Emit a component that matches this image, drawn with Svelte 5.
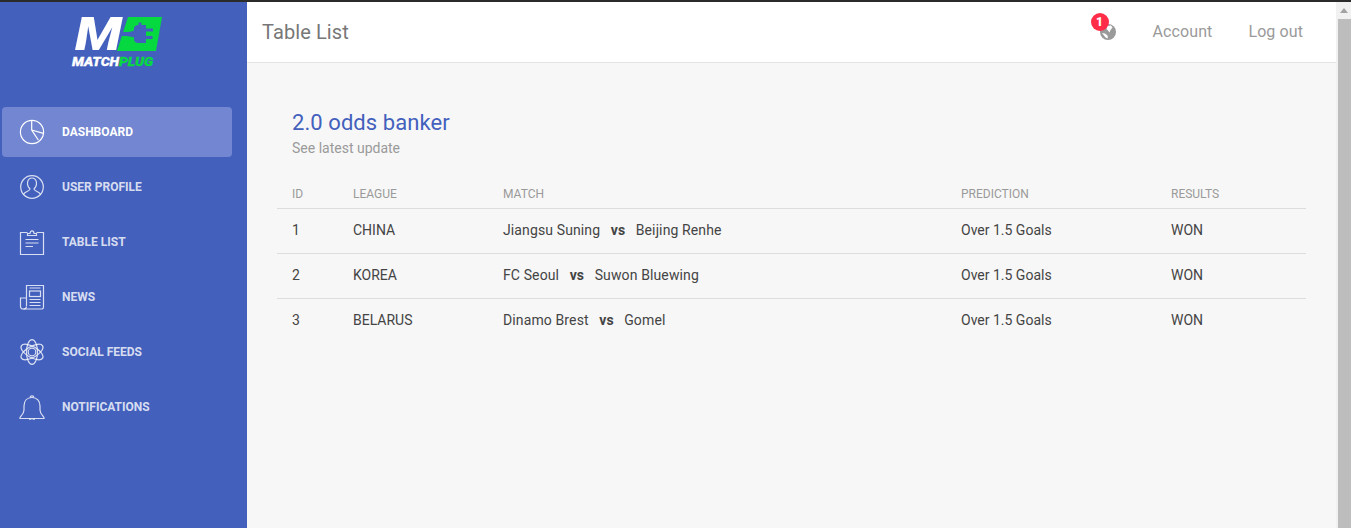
<script>
  const nav = [
    { label: 'Dashboard', icon: 'pie', active: true },
    { label: 'User Profile', icon: 'user' },
    { label: 'Table List', icon: 'clip' },
    { label: 'News', icon: 'news' },
    { label: 'Social Feeds', icon: 'atom' },
    { label: 'Notifications', icon: 'bell' }
  ];
  const rows = [
    { id: 1, league: 'CHINA', home: 'Jiangsu Suning', away: 'Beijing Renhe' },
    { id: 2, league: 'KOREA', home: 'FC Seoul', away: 'Suwon Bluewing' },
    { id: 3, league: 'BELARUS', home: 'Dinamo Brest', away: 'Gomel' }
  ];
</script>

<div class="page">
  <div class="topline"></div>
  <div class="frame">
    <aside class="sidebar">
      <div class="logo">
        <div class="mark">
          <span class="big-m">M</span>
          <svg class="plug" width="45" height="34" viewBox="0 0 45 34" aria-hidden="true">
            <path d="M11 0H45L39 34H0Z" fill="#05d93f" />
            <path d="M4 15H9C12 15 14.500 14.500 17 13.500V11.500C17 9.500 19 8 21.500 8V5.500H24.500V8H29V11.500H36V14.500H29V19H35.500V22H29V26H21.500C19 26 17 24.500 17 22.500V20.500C14 19.500 11 19 6 19H3Z" fill="#4360bd" />
          </svg>
        </div>
        <div class="word"><span class="w1">MATCH</span><span class="w2">PLUG</span></div>
      </div>
      <nav class="nav">
        {#each nav as item}
          <div class="item" class:active={item.active}>
            <svg class="icon" width="26" height="26" viewBox="0 0 26 26" fill="none" stroke="currentColor" stroke-width="1.200">
              {#if item.icon === 'pie'}
                <circle cx="13" cy="13" r="11.600" />
                <path d="M12.700 1.500V11L19.300 21M12.700 11L24.300 14.300" />
              {:else if item.icon === 'user'}
                <circle cx="13" cy="13" r="11.300" />
                <path d="M4.500 20.500c1-3 6-3 6.500-5.500-4-4-3-11 2-11s6 7 2 11c.5 2.500 5.500 2.500 6.500 5.500" />
              {:else if item.icon === 'clip'}
                <path d="M8.500 3.500H1.500V25.500H24.500V3.500H17.500" />
                <path d="M8.500 6.500V4.500H11C11 1 15 1 15 4.500H17.500V6.500Z" />
                <path d="M6.500 10.500H19.500M6.500 14H19.500M6.500 17.500H14" />
              {:else if item.icon === 'news'}
                <path d="M7.500 22V1.500H24.500V23C24.500 24.500 24 25 23 25H4C2.500 25 1.500 24 1.500 22.500V14H7.500" />
                <path d="M7.500 22.500C7.500 24.500 6 25 4.500 25" />
                <rect x="10.500" y="7" width="11" height="5.500" />
                <path d="M10.500 4H21.500M10.500 15.500H21.500M10.500 18.500H21.500M10.500 21.500H21.500" />
              {:else if item.icon === 'atom'}
                <circle cx="13" cy="13" r="3.800" />
                <ellipse cx="13" cy="13" rx="5.500" ry="12.300" />
                <ellipse cx="13" cy="13" rx="5.500" ry="12.300" transform="rotate(60 13 13)" />
                <ellipse cx="13" cy="13" rx="5.500" ry="12.300" transform="rotate(-60 13 13)" />
              {:else}
                <path d="M13 3.500c-5 0-8 3.500-8 8.500v4c0 3.500-2.500 5.500-4 7.500v1h24v-1c-1.500-2-4-4-4-7.500v-4c0-5-3-8.500-8-8.500z" />
                <path d="M11.200 3.500c0-2.300 3.600-2.300 3.600 0M10.500 24.500c.5 2.500 4.500 2.500 5 0" />
              {/if}
            </svg>
            <span class="label">{item.label}</span>
          </div>
        {/each}
      </nav>
    </aside>

    <main class="main">
      <header class="header">
        <div class="title">Table List</div>
        <div class="actions">
          <div class="globe">
            <svg width="16" height="16" viewBox="0 0 16 16" aria-hidden="true">
              <circle cx="8" cy="8" r="8" fill="#9a9a9a" />
              <path d="M7 2l4-.5 1.500 2-2 2.500-1 2.500-1.500-2-1.500-1.500zM2 9l3 .5 2.500 2 .5 3-2.500-1z" fill="#fff" />
            </svg>
            <span class="badge">1</span>
          </div>
          <span class="link">Account</span>
          <span class="link">Log out</span>
        </div>
      </header>

      <section class="content">
        <h4 class="card-title">2.0 odds banker</h4>
        <p class="card-sub">See latest update</p>
        <table>
          <thead>
            <tr>
              <th class="c1">ID</th>
              <th class="c2">League</th>
              <th class="c3">Match</th>
              <th class="c4">Prediction</th>
              <th class="c5">Results</th>
            </tr>
          </thead>
          <tbody>
            {#each rows as r}
              <tr>
                <td>{r.id}</td>
                <td>{r.league}</td>
                <td class="match">{r.home}<b class="vs">vs</b>{r.away}</td>
                <td>Over 1.5 Goals</td>
                <td>WON</td>
              </tr>
            {/each}
          </tbody>
        </table>
      </section>
    </main>

    <div class="scrollbar">
      <div class="arrow"></div>
      <div class="thumb"></div>
    </div>
  </div>
</div>

<style>
  :global(body) {
    margin: 0;
    overflow: hidden;
  }
  .page {
    height: 528px;
    display: flex;
    flex-direction: column;
    font-family: Roboto, "Liberation Sans", sans-serif;
    overflow: hidden;
  }
  .topline {
    height: 2px;
    flex: none;
    background: #2b2b2b;
  }
  .frame {
    flex: 1;
    display: flex;
    min-height: 0;
  }
  .sidebar {
    width: 247px;
    flex: none;
    background: #4360bd;
    padding-top: 15px;
    box-sizing: border-box;
  }
  .logo {
    height: 90px;
    display: flex;
    flex-direction: column;
    align-items: flex-start;
    padding-left: 72px;
  }
  .mark {
    display: flex;
    height: 34px;
    align-items: center;
    margin-left: 3px;
  }
  .big-m {
    display: block;
    font-size: 47px;
    line-height: 34px;
    font-weight: 900;
    font-style: italic;
    color: #fff;
    width: 42px;
    transform: scaleX(1.17);
    transform-origin: left center;
  }
  .plug {
    display: block;
    position: relative;
  }
  .word {
    font-size: 12px;
    line-height: 12px;
    font-weight: 900;
    font-style: italic;
    margin-top: 5px;
    -webkit-text-stroke: 0.3px currentColor;
    transform: scaleX(1.16);
    transform-origin: left center;
  }
  .w1 { color: #fff; }
  .w2 { color: #05d93f; }
  .nav {
    display: flex;
    flex-direction: column;
    gap: 5px;
  }
  .item {
    height: 50px;
    width: 230px;
    margin-left: 2px;
    padding-left: 17px;
    box-sizing: border-box;
    border-radius: 4px;
    display: flex;
    align-items: center;
    color: rgba(255, 255, 255, 0.8);
  }
  .item.active {
    background: #7286d1;
    color: #fff;
  }
  .icon {
    flex: none;
    margin-right: 17px;
  }
  .label {
    font-size: 12px;
    font-weight: 700;
    text-transform: uppercase;
  }
  .main {
    flex: 1;
    min-width: 0;
    background: #f7f7f7;
    display: flex;
    flex-direction: column;
  }
  .header {
    height: 61px;
    box-sizing: border-box;
    flex: none;
    background: #fff;
    border-bottom: 1px solid #e3e3e3;
    display: flex;
    align-items: center;
    justify-content: space-between;
    padding: 0 33px 1px 15px;
  }
  .title {
    font-size: 20px;
    letter-spacing: 0.1px;
    color: #777;
  }
  .actions {
    display: flex;
    align-items: center;
    gap: 36px;
    font-size: 16px;
    letter-spacing: 0.1px;
    color: #9a9a9a;
  }
  .globe {
    position: relative;
    width: 16px;
    height: 16px;
    margin-right: 1px;
  }
  .globe svg {
    display: block;
  }
  .badge {
    position: absolute;
    left: -9px;
    top: -11px;
    width: 18px;
    height: 18px;
    border-radius: 50%;
    background: #ff2d47;
    color: #fff;
    font-size: 12px;
    font-weight: 900;
    text-align: center;
    line-height: 18px;
  }
  .content {
    padding: 45px 30px 0;
  }
  .card-title {
    margin: 0 0 0 15px;
    font-size: 22px;
    line-height: 30px;
    font-weight: 400;
    letter-spacing: 0.07px;
    color: #4360bd;
  }
  .card-sub {
    margin: 1px 0 0 15px;
    font-size: 14px;
    line-height: 18px;
    color: #9a9a9a;
  }
  table {
    width: 100%;
    margin-top: 22px;
    border-collapse: collapse;
    table-layout: fixed;
    font-size: 14px;
    color: #444;
  }
  th {
    height: 29px;
    box-sizing: border-box;
    padding: 2px 0 0 15px;
    text-align: left;
    font-size: 12px;
    font-weight: 400;
    text-transform: uppercase;
    color: #9a9a9a;
    border-bottom: 1px solid #ddd;
  }
  .c1 { width: 61px; }
  .c2 { width: 150px; }
  .c4 { width: 210px; }
  .c5 { width: 150px; }
  td {
    height: 45px;
    box-sizing: border-box;
    padding: 0 0 2px 15px;
    border-bottom: 1px solid #ddd;
  }
  tbody tr:last-child td {
    border-bottom: none;
  }
  .match {
    letter-spacing: 0.12px;
  }
  .vs {
    margin: 0 10.500px;
    font-weight: 700;
  }
  .scrollbar {
    width: 15px;
    flex: none;
    background: #f1f1f1;
    display: flex;
    flex-direction: column;
    align-items: stretch;
  }
  .arrow {
    height: 17px;
    position: relative;
  }
  .arrow::after {
    content: "";
    position: absolute;
    left: 4px;
    top: 6px;
    border-left: 4px solid transparent;
    border-right: 4px solid transparent;
    border-bottom: 5px solid #a3a3a3;
  }
  .thumb {
    flex: 1;
    margin-left: 2px;
    background: #bdbdbd;
  }
</style>
